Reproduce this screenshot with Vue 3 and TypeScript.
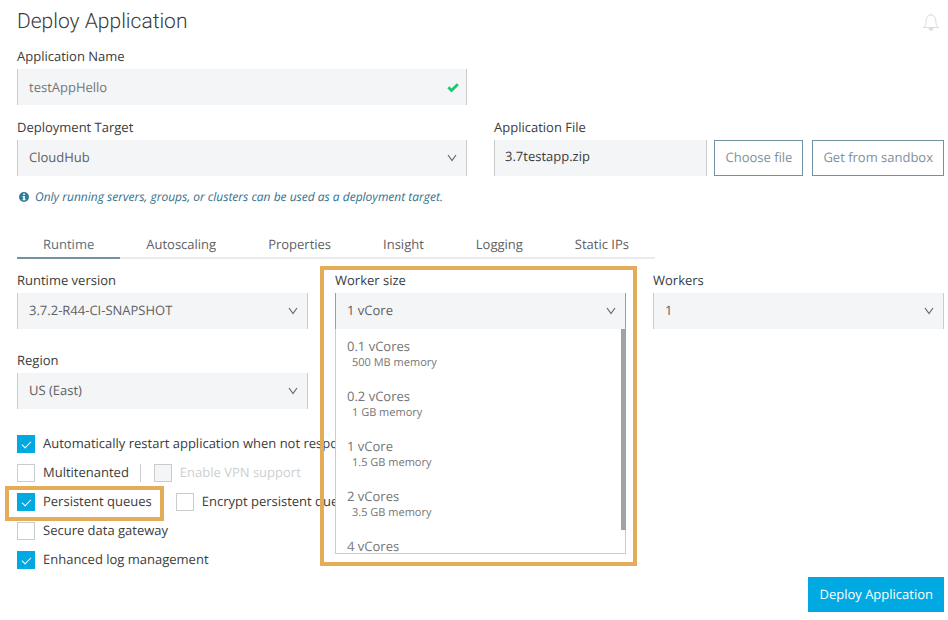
<script setup lang="ts">
import { ref } from 'vue'

interface WorkerSize {
  label: string
  memory: string
}

const tabs = ['Runtime', 'Autoscaling', 'Properties', 'Insight', 'Logging', 'Static IPs']
const activeTab = ref('Runtime')

const workerSizes: WorkerSize[] = [
  { label: '0.1 vCores', memory: '500 MB memory' },
  { label: '0.2 vCores', memory: '1 GB memory' },
  { label: '1 vCore', memory: '1.5 GB memory' },
  { label: '2 vCores', memory: '3.5 GB memory' },
  { label: '4 vCores', memory: '7.5 GB memory' },
]

const appName = ref('testAppHello')
const fileName = ref('3.7testapp.zip')
const workerSize = ref('1 vCore')
const autoRestart = ref(true)
const multitenanted = ref(false)
const vpn = ref(false)
const persistent = ref(true)
const encrypt = ref(false)
const gateway = ref(false)
const logs = ref(true)
</script>

<template>
  <main class="page">
    <header class="header">
      <h1>Deploy Application</h1>
      <button class="bell" type="button" aria-label="Notifications">
        <svg width="18" height="20" viewBox="0 0 18 20" fill="none" stroke="#dcdcdc" stroke-width="1">
          <path d="M9 1.200v1.600M1.500 15.500c2-1.500 2.700-3 2.700-7C4.200 5 6.200 3 9 3s4.800 2 4.800 5.500c0 4 .7 5.500 2.700 7z" />
          <path d="M7 16.500c.2 1.200 1 1.800 2 1.800s1.800-.6 2-1.800z" fill="#dcdcdc" />
        </svg>
      </button>
    </header>

    <form @submit.prevent>
      <div class="halves">
        <div class="field">
          <label for="app-name">Application Name</label>
          <div class="control">
            <input id="app-name" v-model="appName" class="box" type="text" />
            <svg class="valid" width="12" height="10" viewBox="0 0 12 10">
              <path d="M1.300 4.300l3.200 3.200L10.800 1.300" fill="none" stroke="#1dc96f" stroke-width="2.800" />
            </svg>
          </div>
        </div>
      </div>

      <div class="halves target-row">
        <div class="field">
          <label for="target">Deployment Target</label>
          <div class="control">
            <select id="target" class="box">
              <option>CloudHub</option>
            </select>
            <svg class="chevron" width="10" height="8" viewBox="0 0 10 8"><path d="M1 1l4 5.500L9 1" /></svg>
          </div>
        </div>
        <div class="field">
          <label for="app-file">Application File</label>
          <div class="file-row">
            <input id="app-file" v-model="fileName" class="box file" type="text" readonly />
            <div class="file-actions">
              <button class="outline" type="button">Choose file</button>
              <button class="outline" type="button">Get from sandbox</button>
            </div>
          </div>
        </div>
      </div>

      <p class="note">
        <svg width="10" height="10" viewBox="0 0 10 10">
          <circle cx="5" cy="5" r="5" fill="#2f7d9c" />
          <path d="M4.200 1.500h1.700v1.400H4.200zM3.500 4h2.400v3.200h.7v1H3.500v-1h.7V5h-.7z" fill="#fff" />
        </svg>
        <span>Only running servers, groups, or clusters can be used as a deployment target.</span>
      </p>

      <nav class="tabs" role="tablist">
        <button
          v-for="tab in tabs"
          :key="tab"
          type="button"
          role="tab"
          class="tab"
          :class="{ active: tab === activeTab }"
          :aria-selected="tab === activeTab"
          @click="activeTab = tab"
        >
          {{ tab }}
        </button>
      </nav>

      <div class="thirds">
        <div class="field">
          <label for="version">Runtime version</label>
          <div class="control">
            <select id="version" class="box">
              <option>3.7.2-R44-CI-SNAPSHOT</option>
            </select>
            <svg class="chevron" width="10" height="8" viewBox="0 0 10 8"><path d="M1 1l4 5.500L9 1" /></svg>
          </div>
        </div>
        <div class="field">
          <label for="worker-size">Worker size</label>
          <div class="control open">
            <select id="worker-size" v-model="workerSize" class="box">
              <option v-for="size in workerSizes" :key="size.label">{{ size.label }}</option>
            </select>
            <svg class="chevron" width="10" height="8" viewBox="0 0 10 8"><path d="M1 1l4 5.500L9 1" /></svg>
            <div class="popup">
              <ul role="listbox" aria-labelledby="worker-size">
                <li
                  v-for="size in workerSizes"
                  :key="size.label"
                  role="option"
                  :aria-selected="size.label === workerSize"
                  @click="workerSize = size.label"
                >
                  <span class="size">{{ size.label }}</span>
                  <span class="memory">{{ size.memory }}</span>
                </li>
              </ul>
              <span class="thumb"></span>
            </div>
          </div>
        </div>
        <div class="field">
          <label for="workers">Workers</label>
          <div class="control">
            <select id="workers" class="box">
              <option>1</option>
            </select>
            <svg class="chevron" width="10" height="8" viewBox="0 0 10 8"><path d="M1 1l4 5.500L9 1" /></svg>
          </div>
        </div>
        <div class="field">
          <label for="region">Region</label>
          <div class="control">
            <select id="region" class="box">
              <option>US (East)</option>
            </select>
            <svg class="chevron" width="10" height="8" viewBox="0 0 10 8"><path d="M1 1l4 5.500L9 1" /></svg>
          </div>
        </div>
      </div>

      <div class="checks">
        <div class="line">
          <label class="check"><input v-model="autoRestart" type="checkbox" /><span>Automatically restart application when not responding</span></label>
        </div>
        <div class="line divided">
          <label class="check"><input v-model="multitenanted" type="checkbox" /><span>Multitenanted</span></label>
          <label class="check disabled"><input v-model="vpn" type="checkbox" disabled /><span>Enable VPN support</span></label>
        </div>
        <div class="line spaced">
          <label class="check marked"><input v-model="persistent" type="checkbox" /><span>Persistent queues</span></label>
          <label class="check"><input v-model="encrypt" type="checkbox" /><span>Encrypt persistent queues</span></label>
        </div>
        <div class="line">
          <label class="check"><input v-model="gateway" type="checkbox" /><span>Secure data gateway</span></label>
        </div>
        <div class="line">
          <label class="check"><input v-model="logs" type="checkbox" /><span>Enhanced log management</span></label>
        </div>
      </div>

      <footer class="footer">
        <button class="primary" type="submit">Deploy Application</button>
      </footer>
    </form>
  </main>
</template>

<style>
body {
  background: #fff;
}
</style>

<style scoped>
* {
  box-sizing: border-box;
}

.page {
  padding: 0 4px 8px 17px;
  font-family: 'Open Sans', 'Noto Sans', sans-serif;
  font-size: 13px;
  line-height: 18px;
  color: #3a3b3c;
  text-rendering: geometricPrecision;
}

button,
input,
select {
  font: inherit;
  margin: 0;
  border-radius: 0;
  text-rendering: inherit;
}

.header {
  display: flex;
  align-items: center;
  justify-content: space-between;
  height: 43px;
}

h1 {
  margin: 0;
  font-family: Roboto, sans-serif;
  font-size: 21px;
  font-weight: 300;
  line-height: 40px;
}

.bell {
  padding: 0 4px;
  border: 0;
  background: none;
  line-height: 0;
}

.halves,
.thirds {
  display: grid;
  grid-template-columns: repeat(2, minmax(0, 1fr));
  column-gap: 27px;
}

.thirds {
  grid-template-columns: repeat(3, minmax(0, 1fr));
  row-gap: 18px;
  margin-top: 8px;
}

.target-row {
  margin-top: 9px;
}

.field > label {
  display: block;
  line-height: 26px;
}

.control {
  position: relative;
}

.box {
  display: block;
  width: 100%;
  height: 36px;
  padding: 0 11px;
  border: 1px solid #c9cbcd;
  border-width: 0 1px;
  background: #f4f5f7;
  color: #5f6061;
  appearance: none;
  outline: none;
}

select.box {
  padding-bottom: 2px;
}

input.box {
  color: #747576;
}

input.file {
  flex: 1;
  min-width: 0;
  padding: 0 10px 4px;
  color: #3a3b3c;
}

.valid,
.chevron {
  position: absolute;
  top: 14px;
  right: 10px;
  pointer-events: none;
}

.valid {
  right: 8px;
}

.chevron path {
  fill: none;
  stroke: #66686a;
  stroke-width: 1.2;
}

.file-row {
  display: flex;
  gap: 7px;
}

.file-actions {
  display: flex;
  gap: 9px;
}

.outline {
  height: 36px;
  padding: 0 10px 2px;
  border: 1px solid #6f93a0;
  background: #fff;
  color: #7e919b;
  white-space: nowrap;
}

.note {
  display: flex;
  align-items: center;
  gap: 6px;
  margin: 11px 0 24px;
  padding-left: 2px;
  font-size: 12px;
  font-style: italic;
  line-height: 20px;
  color: #35708c;
}

.tabs {
  display: flex;
  width: fit-content;
}

.tab {
  padding: 0 26px;
  border: 0;
  border-bottom: 2px solid #ebebeb;
  background: none;
  color: #5f6061;
  line-height: 26px;
  white-space: nowrap;
}

.tab.active {
  border-color: #6f93a0;
  color: #55707c;
}

.open .box {
  border-color: #9b9d9f;
}

.popup {
  position: absolute;
  z-index: 2;
  top: 100%;
  left: 0;
  right: 0;
}

/* Callout frame around the open worker size field */
.popup::after {
  content: '';
  position: absolute;
  inset: -63px -11px -12px -15px;
  border: 4px solid #e3ac58;
  pointer-events: none;
}

ul {
  height: 225px;
  margin: 0;
  padding: 0;
  overflow-y: auto;
  scrollbar-width: none;
  border: 1px solid #c9cbcd;
  border-top: 0;
  background: #fff;
  list-style: none;
}

li {
  height: 50px;
  padding: 9px 11px 0;
  color: #747576;
}

.size,
.memory {
  display: block;
  line-height: 16px;
}

.memory {
  padding: 1px 0 0 5px;
  font-size: 11px;
}

.thumb {
  position: absolute;
  top: 0;
  right: 0;
  width: 5px;
  height: 201px;
  background: #a0a2a4;
}

.checks {
  display: flex;
  flex-direction: column;
  gap: 11px;
  margin-top: 26px;
}

.line {
  display: flex;
}

.check {
  position: relative;
  display: flex;
  gap: 8px;
  white-space: nowrap;
}

.check span {
  line-height: 16px;
}

.check input {
  flex: none;
  width: 18px;
  height: 18px;
  border: 1px solid #c9cbcd;
  background: #fff;
  appearance: none;
}

.check input:checked {
  display: grid;
  place-items: center;
  border-color: #00a9e2;
  background: #00a9e2;
}

.check input:checked::before {
  content: '';
  width: 8px;
  height: 4px;
  margin: 0 0 2px;
  border: solid #fff;
  border-width: 0 0 1px 1px;
  transform: rotate(-45deg);
}

.divided .check + .check {
  margin-left: 11px;
  padding-left: 13px;
  border-left: 1px solid #c9cbcd;
}

.spaced {
  gap: 24px;
}

.disabled {
  color: #cdcfd0;
}

.disabled input {
  background: #f4f5f7;
}

/* Callout frame around the persistent queues option */
.marked::after {
  content: '';
  position: absolute;
  inset: -7px -12px -10px -12px;
  border: 4px solid #e3ac58;
  pointer-events: none;
}

.footer {
  display: flex;
  justify-content: flex-end;
  margin-top: 8px;
}

.primary {
  height: 35px;
  padding: 0 11px 1px;
  border: 0;
  background: #00a9e2;
  color: #fff;
  font-weight: 500;
}
</style>
